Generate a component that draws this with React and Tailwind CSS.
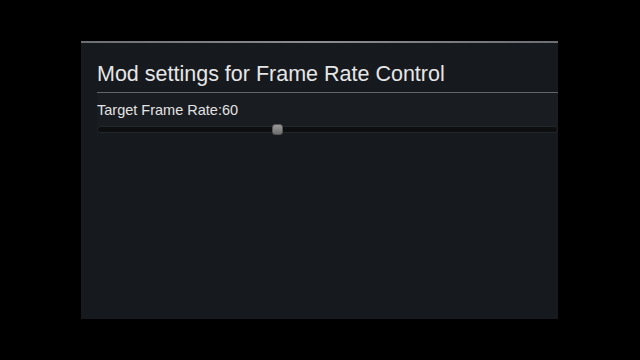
export default function App() {
  return (
    <div className="w-[640px] h-[360px] bg-black relative overflow-hidden" style={{ fontFamily: '"Liberation Sans", Arial, sans-serif' }}>
      <div className="absolute left-[81px] top-[41px] w-[477px] h-[278px] bg-[#16191e] flex flex-col">
        <div className="h-[2px] bg-gradient-to-r from-[#6b6e72] via-[#8a8d90] to-[#6b6e72]" />
        <div className="pl-[16px] flex flex-col">
          <div className="h-[49px] flex items-end pb-[7px] text-[21.5px] leading-none text-[#e6e6e6]">Mod settings for Frame Rate Control</div>
          <div className="h-[1px] bg-[#63676b]" />
          <div className="bg-[#191c21] h-[33px] flex flex-col">
            <div className="text-[14.5px] leading-none text-[#e2e2e2] mt-[10px]">Target Frame Rate:60</div>
          </div>
          <div className="relative h-[7px] bg-[#0c0e10] border border-[#23272c] rounded-sm">
            <div className="absolute left-[174px] top-[-3px] w-[11px] h-[11px] rounded-[3px] bg-gradient-to-b from-[#9a9a9a] to-[#6e6e6e] border border-[#555]" />
          </div>
        </div>
      </div>
    </div>
  );
}
